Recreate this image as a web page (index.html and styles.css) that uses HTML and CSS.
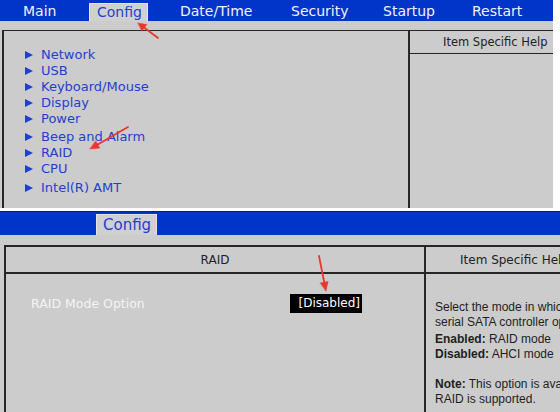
FILE: index.html
```html
<!DOCTYPE html>
<html>
<head>
<meta charset="utf-8">
<link rel="stylesheet" href="styles.css">
</head>
<body>
<div class="shot top">
  <div class="menubar">
    <span class="mi main">Main</span>
    <span class="mi active">Config</span>
    <span class="mi dt">Date/Time</span>
    <span class="mi">Security</span>
    <span class="mi">Startup</span>
    <span class="mi">Restart</span>
  </div>
  <div class="panel1">
    <ul class="list">
      <li><span class="tri"></span>Network</li>
      <li><span class="tri"></span>USB</li>
      <li><span class="tri"></span>Keyboard/Mouse</li>
      <li><span class="tri"></span>Display</li>
      <li><span class="tri"></span>Power</li>
      <li class="gap2"><span class="tri"></span>Beep and Alarm</li>
      <li><span class="tri"></span>RAID</li>
      <li><span class="tri"></span>CPU</li>
      <li class="gap3"><span class="tri"></span>Intel(R) AMT</li>
    </ul>
    <div class="help1">
      <div class="helphead">Item Specific Help</div>
    </div>
  </div>
</div>
<div class="shot bottom">
  <div class="menubar2"><span class="tab2">Config</span></div>
  <div class="panel2">
    <div class="left2">
      <div class="head2 center">RAID</div>
      <div class="row">
        <span class="label">RAID Mode Option</span>
        <span class="value">[Disabled]</span>
      </div>
    </div>
    <div class="right2">
      <div class="head2 hl">Item Specific Help</div>
      <div class="helptext">
        <p>Select the mode in which the<br>serial SATA controller operates.</p>
        <p class="sp"><b>Enabled:</b> RAID mode</p>
        <p><b>Disabled:</b> AHCI mode</p>
        <p class="note"><b>Note:</b> This option is available only when<br>RAID is supported.</p>
      </div>
    </div>
  </div>
</div>
<svg class="arrows" width="560" height="412" viewBox="0 0 560 412">
  <g fill="#e8372c" stroke="#e8372c" stroke-linecap="round">
    <line x1="158" y1="38" x2="144.4" y2="27.8" stroke-width="1.8"/>
    <polygon points="138,23 146.8,24.6 142,31" stroke-width="0.5"/>
    <line x1="128" y1="127" x2="97.8" y2="144.5" stroke-width="1.8"/>
    <polygon points="90,149 99.8,148 95.8,141" stroke-width="0.5"/>
    <line x1="319" y1="256" x2="324.2" y2="282.2" stroke-width="1.8"/>
    <polygon points="326,291 328.1,281.4 320.3,283" stroke-width="0.5"/>
  </g>
</svg>
</body>
</html>
```
FILE: styles.css
```css
* { box-sizing: border-box; }
body {
  margin: 0;
  width: 560px;
  height: 412px;
  overflow: hidden;
  position: relative;
  background: #ffffff;
  font-family: "DejaVu Sans", sans-serif;
}
.shot { background: #cccccc; display: flex; flex-direction: column; overflow: hidden; }
.top { width: 553px; height: 208px; }
.menubar {
  height: 21px;
  background: #0134c8;
  display: grid;
  grid-template-columns: 89px 59px 143px 92px 89px 1fr;
  color: #f2f2f8;
  font-size: 14px;
  line-height: 20px;
  padding-top: 1px;
  white-space: nowrap;
}
.mi.main { padding-left: 23px; }
.mi.active {
  margin-top: 2px;
  background: #d0d0d0;
  border: 1px solid #e4e4e4;
  border-bottom: none;
  color: #1d3fd2;
  line-height: 16px;
  padding-left: 7px;
}
.mi.dt { padding-left: 32px; }
.panel1 {
  flex: 1;
  margin: 9px 0 0 2px;
  border-top: 1.5px solid #262626;
  border-left: 2px solid #262626;
  display: grid;
  grid-template-columns: 406px 1fr;
}
.list {
  margin: 0;
  padding: 16px 0 0 21px;
  list-style: none;
  border-right: 2px solid #262626;
  color: #1d3fd2;
  font-size: 13px;
  line-height: 16px;
}
.list li { display: flex; align-items: center; height: 16px; white-space: nowrap; }
.list li.gap2 { margin-top: 2px; }
.list li.gap3 { margin-top: 3px; }
.tri {
  width: 0; height: 0;
  border-left: 8px solid #1d3fd2;
  border-top: 4px solid transparent;
  border-bottom: 4px solid transparent;
  margin-right: 8px;
}
.helphead {
  height: 23px;
  border-bottom: 1.5px solid #262626;
  padding-left: 33px;
  padding-top: 1px;
  font-size: 11.5px;
  line-height: 21px;
  color: #222;
  white-space: nowrap;
}
.bottom { width: 560px; height: 201px; margin-top: 3px; }
.menubar2 {
  height: 24px;
  background: #0134c8;
  border-top: 1px solid #0a1f70;
  padding-left: 96px;
  display: flex;
  align-items: flex-end;
}
.tab2 {
  width: 61px;
  height: 21px;
  background: #d0d0d0;
  border: 1px solid #e4e4e4;
  border-bottom: none;
  color: #1d3fd2;
  font-size: 15px;
  line-height: 20px;
  padding-left: 6px;
}
.panel2 {
  flex: 1;
  margin: 10px 0 0 4px;
  border-top: 2px solid #262626;
  border-left: 2px solid #262626;
  display: grid;
  grid-template-columns: 420px 1fr;
}
.left2 { border-right: 2px solid #262626; }
.head2 {
  height: 27px;
  border-bottom: 2px solid #262626;
  font-size: 12px;
  padding-top: 2px;
  line-height: 23px;
  color: #222;
  white-space: nowrap;
}
.head2.center { text-align: center; }
.head2.hl { padding-left: 34px; }
.row {
  margin-top: 20px;
  padding-left: 25px;
  display: flex;
  height: 19px;
  align-items: center;
}
.label { width: 259px; color: #f4f4f4; font-size: 12.5px; white-space: nowrap; }
.value {
  width: 72px;
  height: 19px;
  background: #000;
  color: #fff;
  font-size: 12px;
  line-height: 19px;
  text-align: right;
  padding-right: 2px;
}
.helptext {
  padding: 26px 0 0 9px;
  font-family: "Liberation Sans", Arial, sans-serif;
  font-size: 12px;
  line-height: 15px;
  color: #1e1e1e;
  white-space: nowrap;
}
.helptext p { margin: 0; }
.helptext p.sp { margin-top: 2px; }
.helptext p.note { margin-top: 15px; }
.arrows { position: absolute; left: 0; top: 0; pointer-events: none; }
```
